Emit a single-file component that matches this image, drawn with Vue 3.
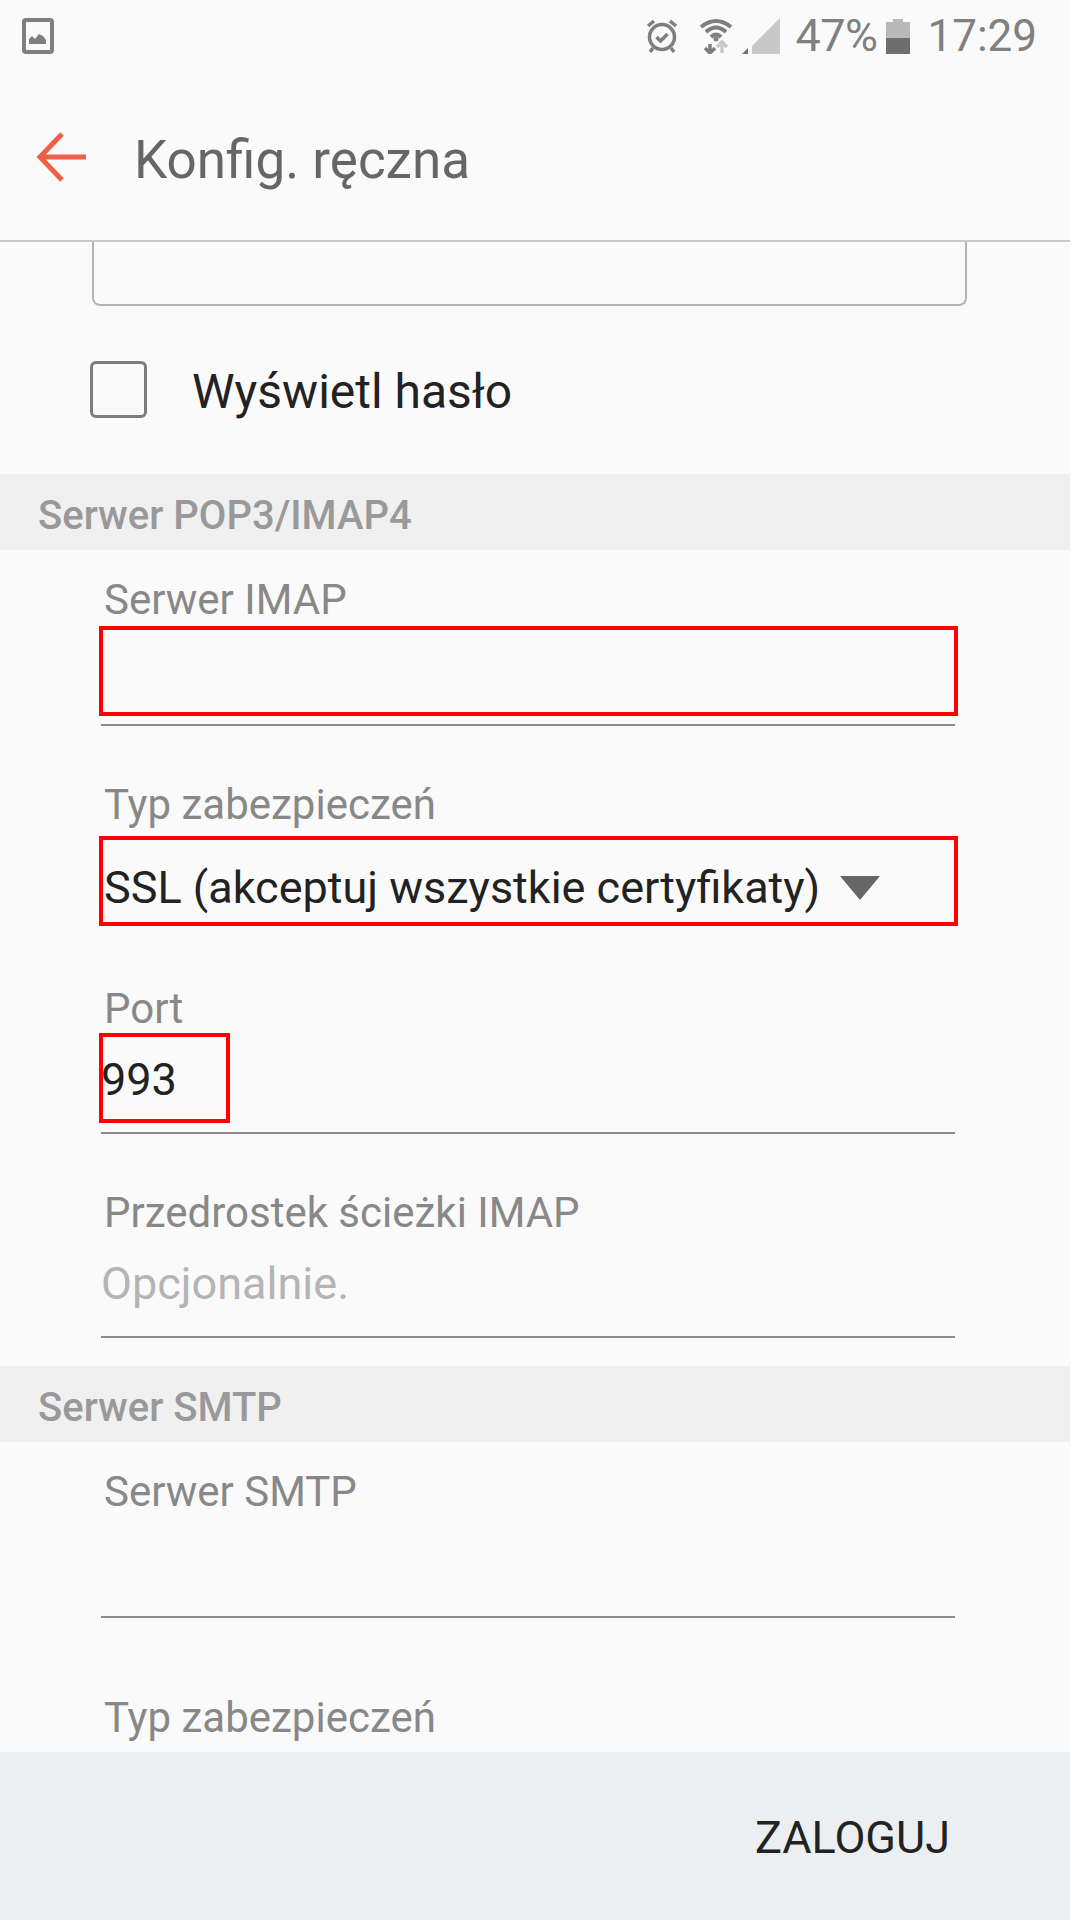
<template>
  <div class="phone">
    <div class="status">
      <svg class="pic" width="32" height="36" viewBox="0 0 32 36">
        <rect x="2" y="2" width="28" height="32" rx="2" fill="none" stroke="#7f7f7f" stroke-width="4" />
        <path d="M7 26v-5l3-3 3 3 4-5 4 2 3 4v4z" fill="#7f7f7f" />
      </svg>
      <div class="status-right">
        <svg width="32" height="36" viewBox="0 0 32 36" fill="none" stroke="#7f7f7f">
          <circle cx="16" cy="19" r="12.500" stroke-width="3.500" />
          <path d="M10.500 19l4 4 7-7" stroke-width="3.500" />
          <path d="M2 8l6-5M30 8l-6-5" stroke-width="3.500" />
          <path d="M7 30l-3 4M25 30l3 4" stroke-width="3.500" />
        </svg>
        <svg class="wifi" width="32" height="36" viewBox="0 0 32 36" fill="none" stroke="#7f7f7f">
          <path d="M1 9Q16-3 31 9M6 14Q16 5 26 14M11 19Q16 14 21 19" stroke-width="4" />
          <circle cx="16" cy="21" r="2.500" fill="#7f7f7f" stroke="none" />
          <path d="M10 26v8M5 30l5 5 5-5" stroke-width="3.500" />
          <path d="M22 35v-9M17 29l5-5 5 5" stroke="#c8c8c8" stroke-width="3.500" />
        </svg>
        <svg class="signal" width="38" height="36" viewBox="0 0 38 36">
          <path d="M10 36V28L38 0v36z" fill="#c8c8c8" />
          <path d="M0 36l6-6v6z" fill="#6e6e6e" />
        </svg>
        <span class="pct">47%</span>
        <svg class="batt" width="24" height="36" viewBox="0 0 24 36">
          <path d="M0 4h7V1h10v3h7v20H0z" fill="#b9b9b9" />
          <path d="M0 20h24v16H0z" fill="#6e6e6e" />
        </svg>
        <span class="clock">17:29</span>
      </div>
    </div>

    <div class="topbar">
      <svg width="52" height="52" viewBox="0 0 52 52" fill="none" stroke="#ee6146" stroke-width="5">
        <path d="M50 26H4M26 3L4 26l22 23" />
      </svg>
      <div class="title">Konfig. ręczna</div>
    </div>

    <div class="scroll">
      <div class="inset"></div>
      <div class="check-row">
        <span class="box"></span>
        <span class="check-label">Wyświetl hasło</span>
      </div>

      <div class="section">Serwer POP3/IMAP4</div>
      <div class="field first ruled">
        <div class="label">Serwer IMAP</div>
        <div class="value"></div>
        <div class="marker m-imap"></div>
      </div>
      <div class="field">
        <div class="label">Typ zabezpieczeń</div>
        <div class="value select">
          SSL (akceptuj wszystkie certyfikaty)
          <span class="caret"></span>
        </div>
        <div class="marker m-select"></div>
      </div>
      <div class="field ruled">
        <div class="label">Port</div>
        <div class="value">993</div>
        <div class="marker m-port"></div>
      </div>
      <div class="field ruled">
        <div class="label">Przedrostek ścieżki IMAP</div>
        <div class="value hint">Opcjonalnie.</div>
      </div>

      <div class="section sec2">Serwer SMTP</div>
      <div class="field first ruled">
        <div class="label">Serwer SMTP</div>
        <div class="value"></div>
      </div>
      <div class="field last">
        <div class="label">Typ zabezpieczeń</div>
      </div>
    </div>

    <div class="footer">
      <span class="login">ZALOGUJ</span>
    </div>
  </div>
</template>

<script setup>
</script>

<style scoped>
.phone {
  width: 1070px;
  height: 1920px;
  display: flex;
  flex-direction: column;
  background: #fafafa;
  font-family: Roboto, "Noto Sans", sans-serif;
  overflow: hidden;
}
.status {
  height: 70px;
  flex: none;
  display: flex;
  justify-content: space-between;
  padding: 18px 33px 0 22px;
  box-sizing: border-box;
}
.status-right {
  display: flex;
  align-items: flex-start;
  color: #808080;
  font-size: 45px;
  line-height: 36px;
}
.wifi {
  margin-left: 22px;
}
.signal {
  margin-left: 10px;
}
.pct {
  margin-left: 15px;
  letter-spacing: -0.5px;
}
.batt {
  margin-left: 9px;
}
.clock {
  margin-left: 17px;
  font-size: 44px;
}
.topbar {
  height: 172px;
  flex: none;
  box-sizing: border-box;
  display: flex;
  align-items: center;
  padding: 4px 0 0 36px;
  gap: 46px;
  border-bottom: 2px solid #c9c9c9;
}
.title {
  font-size: 53px;
  color: #666;
  margin-top: 6px;
}
.scroll {
  flex: 1;
  min-height: 0;
  overflow: hidden;
}
.inset {
  margin-left: 92px;
  width: 875px;
  height: 64px;
  box-sizing: border-box;
  border: 2px solid #b4b4b4;
  border-top: 0;
  border-radius: 0 0 8px 8px;
}
.check-row {
  height: 168px;
  display: flex;
  align-items: center;
  padding-left: 90px;
  gap: 45px;
}
.box {
  width: 57px;
  height: 57px;
  box-sizing: border-box;
  border: 3px solid #7c7c7c;
  border-radius: 6px;
  margin-top: -2px;
}
.check-label {
  font-size: 48px;
  color: #222;
  margin-top: 2px;
}
.section {
  height: 76px;
  background: #f0f0f0;
  padding-left: 38px;
  font-size: 40px;
  font-weight: 500;
  line-height: 84px;
  color: #999;
}
.sec2 {
  margin-top: 28px;
}
.field {
  position: relative;
  margin: 0 115px 0 101px;
  height: 204px;
  box-sizing: border-box;
  padding-top: 53px;
}
.first {
  height: 176px;
  padding-top: 24px;
}
.last {
  padding-top: 74px;
}
.ruled {
  border-bottom: 2px solid #8c8c8c;
}
.label {
  font-size: 42px;
  line-height: 52px;
  color: #888;
  padding-left: 3px;
}
.value {
  font-size: 45px;
  line-height: 60px;
  margin-top: 15px;
  color: #222;
}
.select {
  margin-top: 27px;
  padding-left: 3px;
  display: flex;
  align-items: center;
  gap: 20px;
}
.caret {
  width: 0;
  height: 0;
  border-left: 20px solid transparent;
  border-right: 20px solid transparent;
  border-top: 24px solid #666;
}
.hint {
  color: #b4b4b4;
}
.marker {
  position: absolute;
  box-sizing: border-box;
  border: 4px solid #f00;
  left: -2px;
  width: 859px;
  height: 90px;
}
.m-imap {
  top: 76px;
}
.m-select {
  top: 110px;
}
.m-port {
  top: 103px;
  width: 131px;
}
.footer {
  height: 168px;
  flex: none;
  background: #ebeff2;
  display: flex;
  align-items: center;
  justify-content: flex-end;
  padding: 2px 120px 0 0;
  box-sizing: border-box;
}
.login {
  font-size: 45px;
  color: #222;
}
</style>
